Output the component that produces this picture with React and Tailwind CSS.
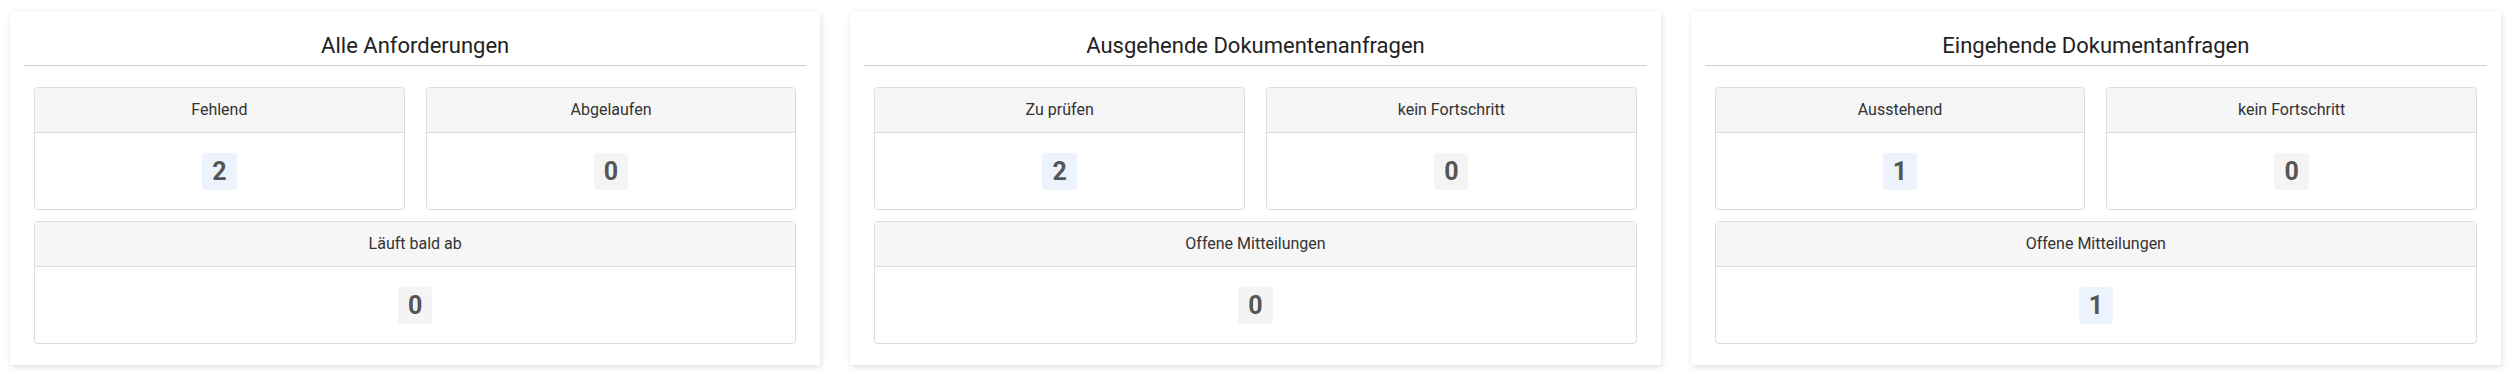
const panels = [
  {
    title: 'Alle Anforderungen',
    top: [
      { label: 'Fehlend', value: 2 },
      { label: 'Abgelaufen', value: 0 },
    ],
    bottom: { label: 'Läuft bald ab', value: 0 },
  },
  {
    title: 'Ausgehende Dokumentenanfragen',
    top: [
      { label: 'Zu prüfen', value: 2 },
      { label: 'kein Fortschritt', value: 0 },
    ],
    bottom: { label: 'Offene Mitteilungen', value: 0 },
  },
  {
    title: 'Eingehende Dokumentanfragen',
    top: [
      { label: 'Ausstehend', value: 1 },
      { label: 'kein Fortschritt', value: 0 },
    ],
    bottom: { label: 'Offene Mitteilungen', value: 1 },
  },
]

function StatCard({ label, value }) {
  return (
    <div className="rounded-[4px] border border-[#dcdcdc] bg-white overflow-hidden">
      <div className="h-[45px] flex items-center justify-center bg-[#f6f6f6] border-b border-[#dcdcdc] text-[16px] text-[#333]">
        {label}
      </div>
      <div className="h-[76px] flex items-center justify-center">
        <span
          className={`rounded-[4px] px-[10px] text-[25px] leading-[37px] font-bold text-[#555] ${
            value > 0 ? 'bg-[#edf3fc]' : 'bg-[#f4f4f4]'
          }`}
        >
          {value}
        </span>
      </div>
    </div>
  )
}

function Panel({ title, top, bottom }) {
  return (
    <div className="bg-white shadow-[1px_2px_6px_rgba(0,0,0,0.13)] px-[14px] pt-[19px] pb-[21px]">
      <h2 className="text-[22px] leading-[30px] text-[#222] text-center pb-[4px] border-b border-[#cfcfcf]">
        {title}
      </h2>
      <div className="px-[10px] pt-[21px] flex flex-col gap-[11px]">
        <div className="grid grid-cols-2 gap-[21px]">
          {top.map((item) => (
            <StatCard key={item.label} {...item} />
          ))}
        </div>
        <StatCard {...bottom} />
      </div>
    </div>
  )
}

export default function App() {
  return (
    <div className="min-h-[375px] bg-white font-['Roboto',sans-serif] pl-[10px] pr-[8px] pt-[12px]">
      <div className="grid grid-cols-3 gap-[30px]">
        {panels.map((p) => (
          <Panel key={p.title} {...p} />
        ))}
      </div>
    </div>
  )
}
